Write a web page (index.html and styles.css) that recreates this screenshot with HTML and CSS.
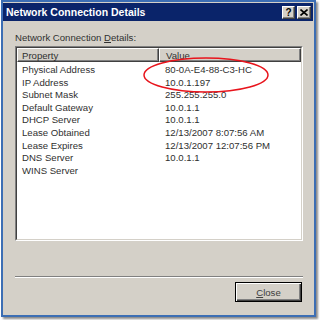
FILE: index.html
```html
<!DOCTYPE html>
<html>
  <head>
    <title>Network Connection Details</title>
    <link rel="stylesheet" href="styles.css">
  </head>
  <body>
    <div class="frame">
      <div class="titlebar">
        <span class="title">Network Connection Details</span>
        <div class="caption-buttons">
          <span class="cap-btn help">?</span>
          <span class="cap-btn">
            <svg width="8" height="7" viewBox="0 0 8 7">
              <path d="M0.5 0.5 L7.5 6.5 M7.5 0.5 L0.5 6.5" stroke="#000" stroke-width="1.6" />
            </svg>
          </span>
        </div>
      </div>

      <div class="content">
        <div class="label">Network Connection <u>D</u>etails:</div>

        <div class="listbox">
          <div class="listbox-inner">
            <div class="list-header">
              <div class="col-head first">Property</div>
              <div class="col-head second">Value</div>
            </div>
            <div class="rows">
              <span class="prop">Physical Address</span><span class="val">80-0A-E4-88-C3-HC</span>
              <span class="prop">IP Address</span><span class="val">10.0.1.197</span>
              <span class="prop">Subnet Mask</span><span class="val">255.255.255.0</span>
              <span class="prop">Default Gateway</span><span class="val">10.0.1.1</span>
              <span class="prop">DHCP Server</span><span class="val">10.0.1.1</span>
              <span class="prop">Lease Obtained</span><span class="val">12/13/2007 8:07:56 AM</span>
              <span class="prop">Lease Expires</span><span class="val">12/13/2007 12:07:56 PM</span>
              <span class="prop">DNS Server</span><span class="val">10.0.1.1</span>
              <span class="prop">WINS Server</span><span class="val"></span>
            </div>
          </div>
          <!-- red marker drawn over the list -->
          <svg class="mark" width="128" height="38" viewBox="0 0 128 38">
            <ellipse cx="64" cy="19" rx="62" ry="17" fill="none" stroke="#e8141c" stroke-width="1.5" />
          </svg>
        </div>

        <div class="separator"></div>

        <div class="actions">
          <button class="btn-default"><u>C</u>lose</button>
        </div>
      </div>
    </div>
  </body>
</html>
```

FILE: styles.css
```css
body,
html {
  margin: 0;
  width: 320px;
  height: 320px;
  overflow: hidden;
  background: #ffffff;
}

body {
  font-family: 'Liberation Sans', Arial, sans-serif;
  font-size: 9.6px;
  color: #303030;
}

.frame {
  margin-left: 1px;
  width: 311px;
  height: 312px;
  border: 2px solid #3c6eb4;
  background: #d4d0c8;
  box-shadow: 2px 2px 2px #8a8a8a;
  padding-top: 1px;
  box-sizing: content-box;
  display: flex;
  flex-direction: column;
}

.titlebar {
  height: 18px;
  margin-right: 1px;
  background: #0a246a;
  display: flex;
  align-items: center;
  justify-content: space-between;
  padding-left: 3px;
  padding-right: 2px;
}

.title {
  color: #fff;
  font-weight: bold;
  font-size: 10.5px;
}

.caption-buttons {
  display: flex;
  gap: 2px;
}

.cap-btn {
  width: 12px;
  height: 11px;
  background: #d4d0c8;
  border: 1px solid;
  border-color: #fff #404040 #404040 #fff;
  box-shadow: inset -1px -1px 0 #808080;
  display: flex;
  align-items: center;
  justify-content: center;
  color: #000;
  font-weight: bold;
  font-size: 10px;
  line-height: 11px;
}

.cap-btn.help {
  width: 11px;
}

.content {
  padding: 11px 0 0 12px;
}

.label {
  line-height: 12px;
}

.listbox {
  position: relative;
  margin-top: 2px;
  width: 288px;
  height: 195px;
  box-sizing: border-box;
  border: 1px solid;
  border-color: #808080 #fff #fff #808080;
}

.listbox-inner {
  height: 100%;
  box-sizing: border-box;
  border: 1px solid;
  border-color: #404040 #d4d0c8 #d4d0c8 #404040;
  background: #fff;
}

.list-header {
  display: flex;
}

.col-head {
  height: 12px;
  line-height: 14px;
  background: #d4d0c8;
  border: 1px solid;
  border-color: #fff #404040 #404040 #fff;
  box-shadow: inset -1px -1px 0 #808080;
}

.col-head.first {
  width: 136px;
  padding-left: 4px;
}

.col-head.second {
  flex: 1;
  padding-left: 6px;
}

.rows {
  display: grid;
  grid-template-columns: 141px 1fr;
  padding-top: 2px;
  line-height: 12.6px;
}

.prop {
  padding-left: 5px;
}

.val {
  padding-left: 7px;
}

.mark {
  position: absolute;
  left: 126px;
  top: 9px;
}

.separator {
  margin-top: 35px;
  width: 288px;
  border-top: 1px solid #808080;
  border-bottom: 1px solid #fff;
}

.actions {
  width: 288px;
  display: flex;
  justify-content: flex-end;
  margin-top: 4px;
}

.btn-default {
  width: 67px;
  height: 20px;
  margin-right: 1px;
  padding: 0;
  font-family: 'Liberation Sans', Arial, sans-serif;
  font-size: 9.6px;
  color: #404040;
  background: #d4d0c8;
  border: 1px solid #000;
  box-shadow: inset 1px 1px 0 #fff, inset -1px -1px 0 #404040, inset -2px -2px 0 #808080;
}
```
